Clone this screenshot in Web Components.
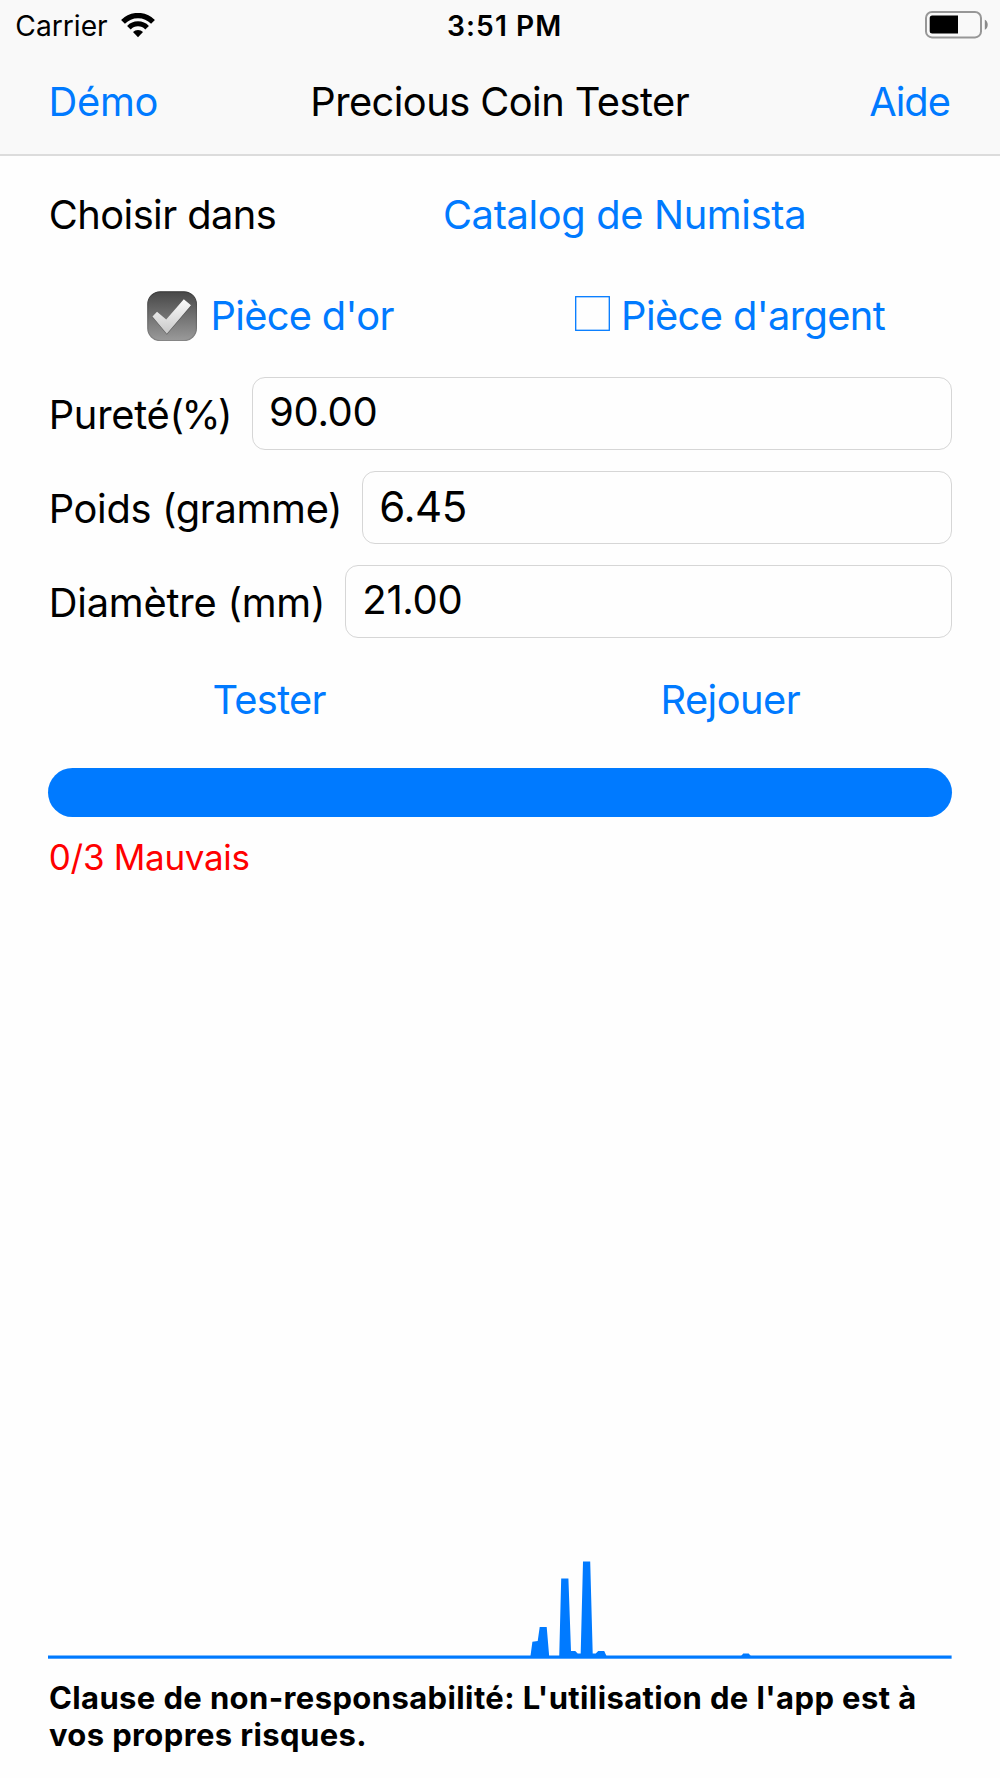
<!DOCTYPE html>
<html lang="fr">
<head>
<meta charset="utf-8">
<title>Precious Coin Tester</title>
<style>
html, body { margin: 0; padding: 0; background: #fefefe; }
body { font-family: Inter, "Liberation Sans", sans-serif; color: #000; }
</style>
</head>
<body>
<coin-app></coin-app>

<script>
const define = (name, html) => {
  const template = document.createElement('template');
  template.innerHTML = html;
  customElements.define(name, class extends HTMLElement {
    constructor() {
      super();
      this.attachShadow({ mode: 'open' }).append(template.content.cloneNode(true));
    }
  });
};

define('wifi-icon', `
<style>:host { display: block; width: 34px; height: 25px; } svg { display: block; }</style>
<svg width="34" height="25" viewBox="0 0 34 25" fill="none" stroke="#000">
  <path d="M2 8.9A20.8 20.8 0 0 1 32 8.9" stroke-width="5.3"/>
  <path d="M7.9 14.65A12.6 12.6 0 0 1 26.1 14.65" stroke-width="5"/>
  <path d="M17 24.2L12 19.1A7 7 0 0 1 22 19.1Z" fill="#000" stroke="none"/>
</svg>`);

define('battery-icon', `
<style>:host { display: block; width: 63px; height: 28px; } svg { display: block; }</style>
<svg width="63" height="28" viewBox="0 0 63 28">
  <rect x="1" y="1" width="55" height="25.4" rx="6" fill="none" stroke="#979797" stroke-width="2"/>
  <path d="M7.2 4.4H33V22.4H7.2A2.5 2.5 0 0 1 4.7 19.9V6.9A2.5 2.5 0 0 1 7.2 4.4Z" fill="#000"/>
  <path d="M59.8 8.7C63.7 10.4 63.7 17 59.8 18.7Z" fill="#8a8a8a"/>
</svg>`);

define('check-icon', `
<style>:host { display: block; width: 50px; height: 50.4px; } svg { display: block; }</style>
<svg width="50" height="50.4" viewBox="0 0 50 50.4">
  <defs>
    <linearGradient id="box" x1="0" y1="0" x2="0" y2="1"><stop offset="0" stop-color="#484848"/><stop offset="1" stop-color="#9a9a9a"/></linearGradient>
    <linearGradient id="rim" x1="0" y1="0" x2="0" y2="1"><stop offset="0" stop-color="#3c3c3c"/><stop offset="1" stop-color="#858585"/></linearGradient>
    <linearGradient id="tick" x1="0" y1="0" x2="0" y2="1"><stop offset="0" stop-color="#fbfbfb"/><stop offset="1" stop-color="#c8c8c8"/></linearGradient>
  </defs>
  <rect x=".8" y=".8" width="48.6" height="48.8" rx="12.4" fill="url(#box)" stroke="url(#rim)" stroke-width="1.2"/>
  <path d="M5.5 26.2L10 21.4L19.2 29.2L36.8 9L44 15.2L19.8 43.8Z" fill="#3f3f3f" opacity=".55"/>
  <path d="M5.5 25.4L10 20.8L19.2 28.6L36.8 8.3L44 14.3L19.8 42.8Z" fill="url(#tick)"/>
</svg>`);

define('empty-box-icon', `
<style>:host { display: block; width: 35px; height: 35px; } svg { display: block; }</style>
<svg width="35" height="35" viewBox="0 0 35 35">
  <rect x=".7" y=".7" width="33.6" height="33.6" fill="none" stroke="#007aff" stroke-width="1.3"/>
</svg>`);

define('status-bar', `
<style>
:host { display: grid; grid-template-columns: 1fr auto 1fr; align-items: center; height: 50px; font-size: 28.2px; line-height: 50px; white-space: nowrap; }
.left { display: flex; align-items: center; padding-left: 15.3px; }
.left span, .time { padding-top: 1.2px; }
wifi-icon { margin: -1px 0 0 12.8px; }
.time { font-weight: 600; letter-spacing: 1.06px; padding-left: 9.4px; }
.right { display: flex; justify-content: flex-end; padding: 0 12px 1px 0; }
</style>
<div class="left"><span>Carrier</span><wifi-icon></wifi-icon></div>
<div class="time">3:51 PM</div>
<div class="right"><battery-icon></battery-icon></div>`);

define('nav-bar', `
<style>
:host { display: flex; align-items: center; height: 104px; box-sizing: border-box; padding: 0 50.2px 1px 48.5px; border-bottom: 0; font-size: 39.8px; line-height: 50px; white-space: nowrap; }
::slotted(*) { color: #007aff; }
.title { letter-spacing: -.55px; margin: 0 auto 0 152.2px; }
</style>
<slot name="back"></slot><div class="title"><slot></slot></div><slot name="action"></slot>`);

define('link-button', `
<style>
:host { display: inline-flex; align-items: center; color: #007aff; font-size: 39.8px; line-height: 50px; white-space: nowrap; letter-spacing: var(--track, 0); cursor: pointer; }
::slotted([slot=icon]) { margin-right: var(--icon-gap, 12px); }
span { padding-top: var(--drop, 0); }
</style>
<slot name="icon"></slot><span><slot></slot></span>`);

define('split-row', `
<style>
:host { display: grid; grid-template-columns: 1fr 1fr; column-gap: 20px; align-items: center; justify-items: center; }
</style>
<slot></slot>`);

define('labelled-field', `
<style>
:host { display: flex; align-items: center; height: 73px; line-height: 50px; white-space: nowrap; }
label { flex: none; width: var(--label); padding: 3.4px 0 0 .4px; box-sizing: border-box; font-size: 39.8px; letter-spacing: var(--track); }
.box { flex: 1; box-sizing: border-box; height: 73px; padding: var(--top, 9px) 0 0 16px; border: 1px solid #d6d6d6; border-radius: 13px; font-size: var(--size, 40px); letter-spacing: var(--value-track); }
</style>
<label><slot name="label"></slot></label><div class="box"><slot></slot></div>`);

define('progress-bar', `
<style>
:host { display: block; height: 49px; border-radius: 24.5px; background: #007aff; }
</style>`);

define('spectrum-chart', `
<style>:host { display: block; height: 100px; } svg { display: block; width: 100%; height: 100px; }</style>
<svg viewBox="48.3 1560 903.6 100" preserveAspectRatio="none" fill="#007aff">
  <path d="M530.7 1656.5L532.7 1641.7L538 1641L540 1627H547L549.5 1656.5Z"/>
  <path d="M559.5 1656.5L561.5 1578.5H568.7L571.3 1651H575.5L578 1653.4H581L583.3 1561.5H590.5L593 1653.4H596L598.5 1651H604.5L607 1656.5Z"/>
  <path d="M741 1656.5L743.5 1653.4H749L751.5 1656.5Z"/>
  <rect x="48.3" y="1655.5" width="903.6" height="3.2"/>
</svg>`);

define('coin-app', `
<style>
:host { display: flex; flex-direction: column; width: 1000px; height: 1778px; background: #fefefe; }
header { flex: none; background: #f9f9f9; border-bottom: 2px solid #dcdcdc; }
main { flex: 1; display: flex; flex-direction: column; padding: 33.5px 48.1px 25.1px 48.3px; }
.catalog { display: flex; height: 50px; line-height: 50px; font-size: 39.8px; white-space: nowrap; }
.catalog span { width: 248.9px; padding-left: .5px; box-sizing: border-box; letter-spacing: -.559px; }
.catalog div { flex: 1; display: flex; justify-content: center; }
.metals { margin-top: 50.8px; height: 50.4px; --drop: 1px; }
.fields { display: flex; flex-direction: column; gap: 21px; margin-top: 36.3px; }
.actions { margin-top: 36.5px; height: 50px; --drop: 1px; }
progress-bar { margin-top: 43.2px; }
.verdict { margin-top: 20.6px; padding-left: .5px; font-size: 35px; line-height: 40px; letter-spacing: -.3px; color: #f00; }
.space { flex: 1; }
footer { margin-top: 18.9px; font-size: 31px; font-weight: 700; line-height: 37px; letter-spacing: .388px; padding-left: .6px; white-space: nowrap; }
</style>
<header>
  <status-bar></status-bar>
  <nav-bar>
    <link-button slot="back" style="--track:-.261px">Démo</link-button>
    Precious Coin Tester
    <link-button slot="action" style="--track:-1.05px">Aide</link-button>
  </nav-bar>
</header>
<main>
  <div class="catalog"><span>Choisir dans</span><div><link-button style="--track:-.34px">Catalog de Numista</link-button></div></div>
  <split-row class="metals">
    <link-button style="--track:-.66px;--icon-gap:13.6px;padding-left:2.2px"><check-icon slot="icon"></check-icon>Pièce d'or</link-button>
    <link-button style="--track:-.6px;--icon-gap:11.3px;padding-right:2px"><empty-box-icon slot="icon" style="margin-top:-4px"></empty-box-icon>Pièce d'argent</link-button>
  </split-row>
  <div class="fields">
    <labelled-field style="--label:203.7px;--track:-.25px;--value-track:-.316px"><span slot="label">Pureté<span style="letter-spacing:-2.5px">(%)</span></span>90.00</labelled-field>
    <labelled-field style="--label:314px;--track:-.32px;--size:42px;--value-track:-.5px;--top:10px"><span slot="label">Poids (gramme)</span>6.45</labelled-field>
    <labelled-field style="--label:297px;--track:-.2px;--value-track:-.3px"><span slot="label">Diamètre (mm)</span>21.00</labelled-field>
  </div>
  <split-row class="actions">
    <link-button style="--track:-.7px">Tester</link-button>
    <link-button style="--track:-.52px;padding-right:1.4px">Rejouer</link-button>
  </split-row>
  <progress-bar></progress-bar>
  <div class="verdict">0/3 Mauvais</div>
  <div class="space"></div>
  <spectrum-chart></spectrum-chart>
  <footer>Clause de non-responsabilité: L'utilisation de l'app est à<br>vos propres risques.</footer>
</main>`);
</script>
</body>
</html>
